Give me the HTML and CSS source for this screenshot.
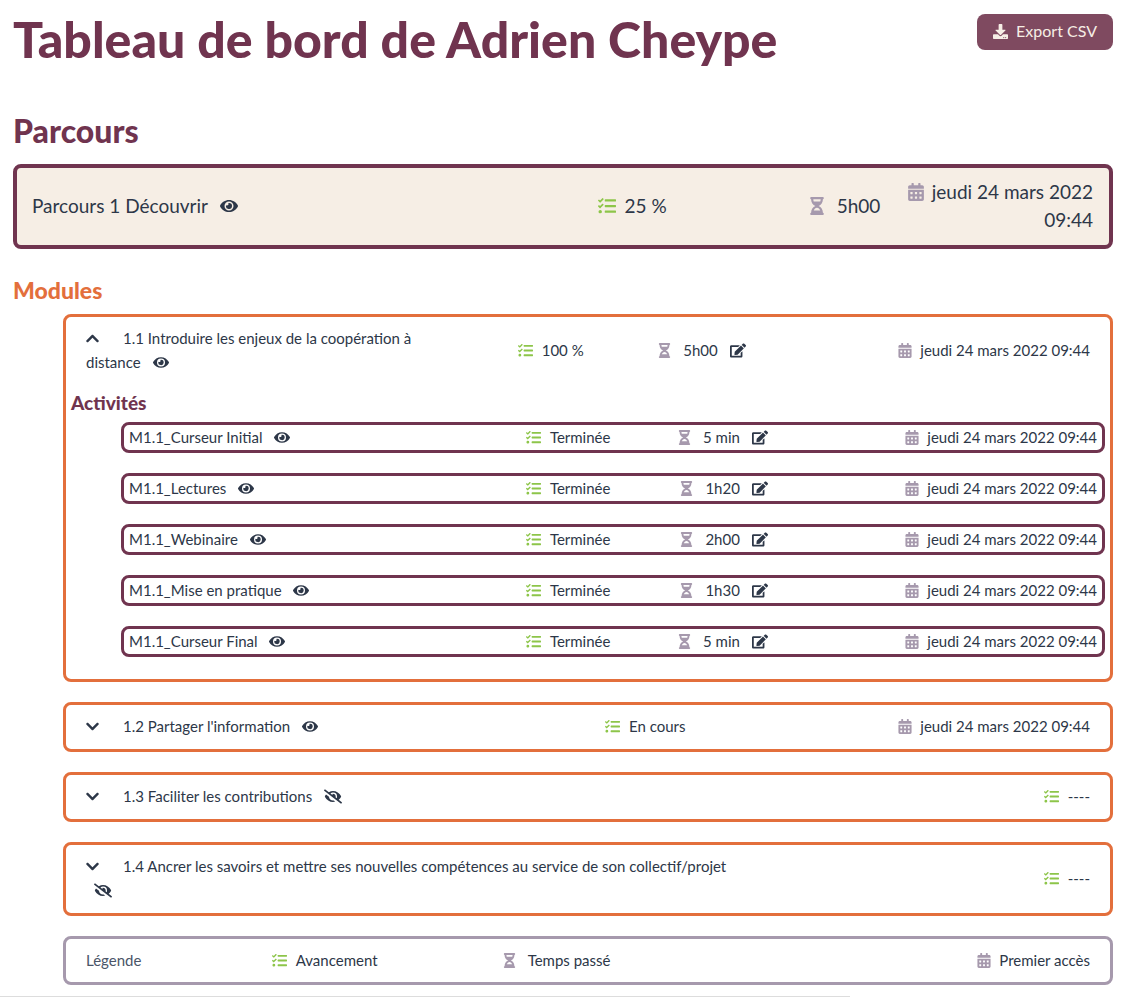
FILE: index.html
```html
<!DOCTYPE html>
<html lang="fr">
<head>
    <meta charset="UTF-8">
    <meta name="viewport" content="width=device-width, initial-scale=1.0">
    <title>Tableau de bord de Adrien Cheype</title>
    <link rel="stylesheet" href="styles.css">
</head>
<body>

<!-- icons -->
<svg class="sprite" aria-hidden="true">
    <symbol id="eye" viewBox="0 0 576 512"><path d="M572.52 241.4C518.29 135.59 410.93 64 288 64S57.68 135.64 3.48 241.41a32.35 32.35 0 0 0 0 29.19C57.71 376.41 165.07 448 288 448s230.32-71.64 284.52-177.41a32.35 32.35 0 0 0 0-29.19zM288 400a144 144 0 1 1 144-144 143.93 143.93 0 0 1-144 144zm0-240a95.31 95.31 0 0 0-25.31 3.79 47.85 47.85 0 0 1-66.9 66.9A95.78 95.78 0 1 0 288 160z"/></symbol>
    <symbol id="eye-slash" viewBox="0 0 640 512"><path d="M320 400c-75.85 0-137.25-58.71-142.9-133.11L72.2 185.82c-13.79 17.3-26.48 35.59-36.72 55.59a32.35 32.35 0 0 0 0 29.19C89.71 376.41 197.07 448 320 448c26.91 0 52.87-4 77.89-10.46L346 397.39a144.13 144.13 0 0 1-26 2.61zm313.82 58.1l-110.55-85.44a331.25 331.25 0 0 0 81.25-102.07 32.35 32.35 0 0 0 0-29.19C550.29 135.59 442.93 64 320 64a308.15 308.15 0 0 0-147.32 37.7L45.46 3.37A16 16 0 0 0 23 6.18L3.37 31.45A16 16 0 0 0 6.18 53.9l588.36 454.73a16 16 0 0 0 22.46-2.81l19.64-25.27a16 16 0 0 0-2.82-22.45zm-183.72-142l-39.3-30.38A94.75 94.75 0 0 0 416 256a94.76 94.76 0 0 0-121.31-92.21A47.65 47.65 0 0 1 304 192a46.64 46.64 0 0 1-1.54 10l-73.61-56.89A142.31 142.31 0 0 1 320 112a143.92 143.92 0 0 1 144 144c0 21.63-5.29 41.79-13.9 60.11z"/></symbol>
    <symbol id="edit" viewBox="0 0 576 512"><path d="M402.6 83.2l90.2 90.2c3.8 3.8 3.8 10 0 13.8L274.4 405.6l-92.8 10.3c-12.4 1.4-22.9-9.1-21.5-21.5l10.3-92.8L388.8 83.2c3.8-3.8 10-3.8 13.8 0zm162-22.9l-48.8-48.8c-15.2-15.2-39.9-15.2-55.2 0l-35.4 35.4c-3.8 3.8-3.8 10 0 13.8l90.2 90.2c3.8 3.8 10 3.8 13.8 0l35.4-35.4c15.2-15.3 15.2-40 0-55.2zM384 346.2V448H64V128h229.8c3.2 0 6.2-1.3 8.5-3.5l40-40c7.6-7.6 2.2-20.5-8.5-20.5H48C21.5 64 0 85.5 0 112v352c0 26.5 21.5 48 48 48h352c26.5 0 48-21.5 48-48V306.2c0-10.7-12.9-16-20.5-8.5l-40 40c-2.2 2.3-3.5 5.3-3.5 8.5z"/></symbol>
    <symbol id="tasks" viewBox="0 0 512 512"><path d="M139.61 35.5a12 12 0 0 0-17 0L58.93 98.81l-22.7-22.12a12 12 0 0 0-17 0L3.53 92.41a12 12 0 0 0 0 17l47.59 47.4a12.78 12.78 0 0 0 17.61 0l15.59-15.62L156.52 69a12.09 12.09 0 0 0 .09-17zm0 159.19a12 12 0 0 0-17 0l-63.68 63.72-22.7-22.1a12 12 0 0 0-17 0L3.53 252a12 12 0 0 0 0 17L51 316.5a12.77 12.77 0 0 0 17.6 0l15.7-15.69 72.2-72.22a12 12 0 0 0 .09-16.9zM64 368c-26.49 0-48.59 21.5-48.59 48S37.53 464 64 464a48 48 0 0 0 0-96zm432 16H208a16 16 0 0 0-16 16v32a16 16 0 0 0 16 16h288a16 16 0 0 0 16-16v-32a16 16 0 0 0-16-16zm0-320H208a16 16 0 0 0-16 16v32a16 16 0 0 0 16 16h288a16 16 0 0 0 16-16V80a16 16 0 0 0-16-16zm0 160H208a16 16 0 0 0-16 16v32a16 16 0 0 0 16 16h288a16 16 0 0 0 16-16v-32a16 16 0 0 0-16-16z"/></symbol>
    <symbol id="hourglass" viewBox="0 0 384 512"><path d="M360 0H24C10.745 0 0 10.745 0 24v16c0 13.255 10.745 24 24 24 0 90.965 51.016 167.734 120.842 192C75.016 280.266 24 357.035 24 448c-13.255 0-24 10.745-24 24v16c0 13.255 10.745 24 24 24h336c13.255 0 24-10.745 24-24v-16c0-13.255-10.745-24-24-24 0-90.965-51.016-167.734-120.842-192C308.984 231.734 360 154.965 360 64c13.255 0 24-10.745 24-24V24c0-13.255-10.745-24-24-24zm-75.078 384H99.08c17.059-46.797 52.096-80 92.92-80 40.821 0 75.862 33.196 92.922 80zm.019-256H99.078C91.988 108.548 88 86.748 88 64h208c0 22.805-3.987 44.587-11.059 64z"/></symbol>
    <symbol id="calendar" viewBox="0 0 448 512"><path d="M0 464c0 26.5 21.5 48 48 48h352c26.5 0 48-21.5 48-48V192H0v272zm320-196c0-6.6 5.4-12 12-12h40c6.6 0 12 5.4 12 12v40c0 6.6-5.4 12-12 12h-40c-6.6 0-12-5.4-12-12v-40zm0 128c0-6.6 5.4-12 12-12h40c6.6 0 12 5.4 12 12v40c0 6.6-5.4 12-12 12h-40c-6.6 0-12-5.4-12-12v-40zM192 268c0-6.6 5.4-12 12-12h40c6.6 0 12 5.4 12 12v40c0 6.6-5.4 12-12 12h-40c-6.6 0-12-5.4-12-12v-40zm0 128c0-6.6 5.4-12 12-12h40c6.6 0 12 5.4 12 12v40c0 6.6-5.4 12-12 12h-40c-6.6 0-12-5.4-12-12v-40zM64 268c0-6.6 5.4-12 12-12h40c6.6 0 12 5.4 12 12v40c0 6.6-5.4 12-12 12H76c-6.6 0-12-5.4-12-12v-40zm0 128c0-6.6 5.4-12 12-12h40c6.6 0 12 5.4 12 12v40c0 6.6-5.4 12-12 12H76c-6.6 0-12-5.4-12-12v-40zM400 64h-48V16c0-8.8-7.2-16-16-16h-32c-8.8 0-16 7.2-16 16v48H160V16c0-8.8-7.2-16-16-16h-32c-8.8 0-16 7.2-16 16v48H48C21.5 64 0 85.5 0 112v48h448v-48c0-26.5-21.5-48-48-48z"/></symbol>
    <symbol id="download" viewBox="0 0 512 512"><path d="M216 0h80c13.3 0 24 10.7 24 24v168h87.7c17.8 0 26.7 21.5 14.1 34.1L269.7 378.3c-7.5 7.5-19.8 7.5-27.3 0L90.1 226.1c-12.6-12.6-3.7-34.1 14.1-34.1H192V24c0-13.3 10.7-24 24-24zm296 376v112c0 13.3-10.7 24-24 24H24c-13.3 0-24-10.7-24-24V376c0-13.3 10.7-24 24-24h146.7l49 49c20.1 20.1 52.5 20.1 72.6 0l49-49H488c13.3 0 24 10.7 24 24zm-124 88c0-11-9-20-20-20s-20 9-20 20 9 20 20 20 20-9 20-20zm64 0c0-11-9-20-20-20s-20 9-20 20 9 20 20 20 20-9 20-20z"/></symbol>
    <symbol id="chevron-down" viewBox="0 0 448 512"><path d="M207.029 381.476L12.686 187.132c-9.373-9.373-9.373-24.569 0-33.941l22.667-22.667c9.357-9.357 24.522-9.375 33.901-.04L224 284.505l154.745-154.021c9.379-9.335 24.544-9.317 33.901.04l22.667 22.667c9.373 9.373 9.373 24.569 0 33.941L240.971 381.476c-9.373 9.372-24.569 9.372-33.942 0z"/></symbol>
    <symbol id="chevron-up" viewBox="0 0 448 512"><path d="M240.971 130.524l194.343 194.343c9.373 9.373 9.373 24.569 0 33.941l-22.667 22.667c-9.357 9.357-24.522 9.375-33.901.04L224 227.495 69.255 381.516c-9.379 9.335-24.544 9.317-33.901-.04l-22.667-22.667c-9.373-9.373-9.373-24.569 0-33.941L207.03 130.525c9.372-9.373 24.568-9.373 33.941-.001z"/></symbol>
</svg>

<main class="dashboard">
    <header class="page-header">
        <h1>Tableau de bord de Adrien Cheype</h1>
        <button class="export" type="button"><svg class="icon"><use href="#download"/></svg>Export CSV</button>
    </header>

    <h2>Parcours</h2>
    <section class="card parcours">
        <div>Parcours 1 Découvrir <a class="view" href="#" aria-label="Voir"><svg class="icon wide"><use href="#eye"/></svg></a></div>
        <div class="stat"><svg class="icon progress"><use href="#tasks"/></svg>25 %</div>
        <div class="stat"><svg class="icon glass"><use href="#hourglass"/></svg>5h00</div>
        <div class="when"><svg class="icon date"><use href="#calendar"/></svg>jeudi 24 mars 2022 09:44</div>
    </section>

    <h3>Modules</h3>
    <div class="modules">
        <section class="card module">
            <div class="row row-open">
                <div><button class="toggle" type="button" aria-expanded="true" aria-label="Replier"><svg class="icon"><use href="#chevron-up"/></svg></button>1.1 Introduire les enjeux de la coopération à distance <a class="view" href="#" aria-label="Voir"><svg class="icon wide"><use href="#eye"/></svg></a></div>
                <div class="stat"><svg class="icon progress"><use href="#tasks"/></svg>100 %</div>
                <div class="stat"><svg class="icon glass"><use href="#hourglass"/></svg>5h00<button class="edit" type="button" aria-label="Modifier"><svg class="icon wide"><use href="#edit"/></svg></button></div>
                <div class="stat end"><svg class="icon date"><use href="#calendar"/></svg>jeudi 24 mars 2022 09:44</div>
            </div>
            <h4>Activités</h4>
            <div class="activities">
                <div class="card activity">
                    <div>M1.1_Curseur Initial <a class="view" href="#" aria-label="Voir"><svg class="icon wide"><use href="#eye"/></svg></a></div>
                    <div class="stat"><svg class="icon progress"><use href="#tasks"/></svg>Terminée</div>
                    <div class="stat end"><svg class="icon glass"><use href="#hourglass"/></svg>5 min<button class="edit" type="button" aria-label="Modifier"><svg class="icon wide"><use href="#edit"/></svg></button></div>
                    <div class="stat end"><svg class="icon date"><use href="#calendar"/></svg>jeudi 24 mars 2022 09:44</div>
                </div>
                <div class="card activity">
                    <div>M1.1_Lectures <a class="view" href="#" aria-label="Voir"><svg class="icon wide"><use href="#eye"/></svg></a></div>
                    <div class="stat"><svg class="icon progress"><use href="#tasks"/></svg>Terminée</div>
                    <div class="stat end"><svg class="icon glass"><use href="#hourglass"/></svg>1h20<button class="edit" type="button" aria-label="Modifier"><svg class="icon wide"><use href="#edit"/></svg></button></div>
                    <div class="stat end"><svg class="icon date"><use href="#calendar"/></svg>jeudi 24 mars 2022 09:44</div>
                </div>
                <div class="card activity">
                    <div>M1.1_Webinaire <a class="view" href="#" aria-label="Voir"><svg class="icon wide"><use href="#eye"/></svg></a></div>
                    <div class="stat"><svg class="icon progress"><use href="#tasks"/></svg>Terminée</div>
                    <div class="stat end"><svg class="icon glass"><use href="#hourglass"/></svg>2h00<button class="edit" type="button" aria-label="Modifier"><svg class="icon wide"><use href="#edit"/></svg></button></div>
                    <div class="stat end"><svg class="icon date"><use href="#calendar"/></svg>jeudi 24 mars 2022 09:44</div>
                </div>
                <div class="card activity">
                    <div>M1.1_Mise en pratique <a class="view" href="#" aria-label="Voir"><svg class="icon wide"><use href="#eye"/></svg></a></div>
                    <div class="stat"><svg class="icon progress"><use href="#tasks"/></svg>Terminée</div>
                    <div class="stat end"><svg class="icon glass"><use href="#hourglass"/></svg>1h30<button class="edit" type="button" aria-label="Modifier"><svg class="icon wide"><use href="#edit"/></svg></button></div>
                    <div class="stat end"><svg class="icon date"><use href="#calendar"/></svg>jeudi 24 mars 2022 09:44</div>
                </div>
                <div class="card activity">
                    <div>M1.1_Curseur Final <a class="view" href="#" aria-label="Voir"><svg class="icon wide"><use href="#eye"/></svg></a></div>
                    <div class="stat"><svg class="icon progress"><use href="#tasks"/></svg>Terminée</div>
                    <div class="stat end"><svg class="icon glass"><use href="#hourglass"/></svg>5 min<button class="edit" type="button" aria-label="Modifier"><svg class="icon wide"><use href="#edit"/></svg></button></div>
                    <div class="stat end"><svg class="icon date"><use href="#calendar"/></svg>jeudi 24 mars 2022 09:44</div>
                </div>
            </div>
        </section>

        <section class="card module">
            <div class="row row-started">
                <div><button class="toggle" type="button" aria-expanded="false" aria-label="Déplier"><svg class="icon"><use href="#chevron-down"/></svg></button>1.2 Partager l'information <a class="view" href="#" aria-label="Voir"><svg class="icon wide"><use href="#eye"/></svg></a></div>
                <div class="stat"><svg class="icon progress"><use href="#tasks"/></svg>En cours</div>
                <div class="stat end"><svg class="icon date"><use href="#calendar"/></svg>jeudi 24 mars 2022 09:44</div>
            </div>
        </section>

        <section class="card module">
            <div class="row row-locked">
                <div><button class="toggle" type="button" aria-expanded="false" aria-label="Déplier"><svg class="icon"><use href="#chevron-down"/></svg></button>1.3 Faciliter les contributions <a class="view" href="#" aria-label="Masqué"><svg class="icon slash"><use href="#eye-slash"/></svg></a></div>
                <div class="stat end"><svg class="icon progress"><use href="#tasks"/></svg>----</div>
            </div>
        </section>

        <section class="card module">
            <div class="row row-locked">
                <div><button class="toggle" type="button" aria-expanded="false" aria-label="Déplier"><svg class="icon"><use href="#chevron-down"/></svg></button>1.4 Ancrer les savoirs et mettre ses nouvelles compétences au service de son collectif/projet <a class="view" href="#" aria-label="Masqué"><svg class="icon slash"><use href="#eye-slash"/></svg></a></div>
                <div class="stat end"><svg class="icon progress"><use href="#tasks"/></svg>----</div>
            </div>
        </section>

        <section class="card legend">
            <div class="row row-legend">
                <div class="legend-title">Légende</div>
                <div class="stat"><svg class="icon progress"><use href="#tasks"/></svg>Avancement</div>
                <div class="stat"><svg class="icon glass"><use href="#hourglass"/></svg>Temps passé</div>
                <div class="stat end"><svg class="icon date"><use href="#calendar"/></svg>Premier accès</div>
            </div>
        </section>
    </div>
</main>
<hr class="divider">

</body>
</html>
```
FILE: styles.css
```css
* {
    box-sizing: border-box;
}

body {
    margin: 0;
    background-color: #ffffff;
    color: #2d3748;
    font-family: Lato, "Open Sans", sans-serif;
    font-size: 15px;
    line-height: 24px;
}

.sprite {
    display: none;
}

.dashboard {
    padding: 11px 13px;
}

.page-header {
    display: flex;
    justify-content: space-between;
    align-items: flex-start;
}

h1, h2, h3, h4 {
    margin: 0;
    color: #70344f;
    font-weight: 900;
}

h1 {
    font-size: 50px;
    line-height: 56px;
}

h2 {
    margin-top: 44px;
    font-size: 32px;
    line-height: 40px;
}

h3 {
    margin-top: 25px;
    color: #e36f3c;
    font-size: 23px;
    line-height: 32px;
}

h4 {
    font-size: 19px;
    line-height: 24px;
}

.icon {
    display: inline-block;
    flex-shrink: 0;
    width: 15px;
    height: 15px;
    fill: currentColor;
    vertical-align: -2px;
}

.wide {
    width: 16px;
}

.slash {
    width: 18px;
}

.progress {
    margin-right: 9px;
    color: #8dc549;
}

.glass {
    width: 13px;
    margin-right: 12px;
    color: #a699ad;
}

.date {
    width: 14px;
    margin-right: 8px;
    color: #a699ad;
}

button {
    padding: 0;
    border: none;
    background: none;
    color: inherit;
    font: inherit;
    cursor: pointer;
}

.export {
    display: flex;
    align-items: center;
    gap: 8px;
    height: 36px;
    margin-top: 3px;
    padding: 0 16px 2px;
    border-radius: 8px;
    background-color: #7f4a60;
    color: #f6eee5;
    font-size: 16px;
    white-space: nowrap;
}

.export:hover {
    background-color: #70344f;
}

.toggle {
    margin-right: 24px;
}

.toggle .icon {
    width: 13px;
}

.view {
    margin-left: 8px;
    color: inherit;
}

.edit {
    display: flex;
    margin-left: 12px;
}

.card {
    border: 3px solid #70344f;
    border-radius: 8px;
}

.stat {
    display: flex;
    align-items: center;
    white-space: nowrap;
}

.end {
    justify-content: flex-end;
}

.parcours {
    display: grid;
    grid-template-columns: 533fr 199fr 83fr 185fr;
    align-items: center;
    margin-top: 13px;
    padding: 10px 16px 11px 15px;
    border-width: 4px;
    background-color: #f6eee5;
    font-size: 19px;
    line-height: 28px;
}

.parcours .icon {
    width: 18px;
    height: 18px;
}

.parcours .glass,
.parcours .date {
    width: 16px;
}

.when {
    text-align: right;
}

.modules {
    display: flex;
    flex-direction: column;
    gap: 20px;
    margin-top: 8px;
    padding-left: 50px;
}

.module {
    padding: 9px 5px 11px;
    border-color: #e36f3c;
}

.row {
    display: grid;
    align-items: center;
    padding: 0 15px;
}

.row-open {
    grid-template-columns: 43fr 14fr 13fr 30fr;
    margin-bottom: 17px;
}

.row-open > :first-child {
    padding-right: 72px;
}

.row-started {
    grid-template-columns: 517fr 183fr 300fr;
}

.row-locked {
    grid-template-columns: 65fr 35fr;
}

.row-legend {
    grid-template-columns: 37fr 46fr 60fr 57fr;
}

.activities {
    display: flex;
    flex-direction: column;
    gap: 20px;
    margin-top: 7px;
    padding: 0 0 11px 50px;
}

.activity {
    display: grid;
    grid-template-columns: 41fr 9fr 16fr 34fr;
    align-items: center;
    padding: 0 5px 1px;
}

.legend {
    padding: 9px 5px 10px;
    border-color: #a699ad;
}

.legend-title {
    color: #4a5568;
}

.divider {
    width: 850px;
    max-width: 100%;
    height: 1px;
    margin: 0;
    border: none;
    background-color: #dddddd;
}
```
